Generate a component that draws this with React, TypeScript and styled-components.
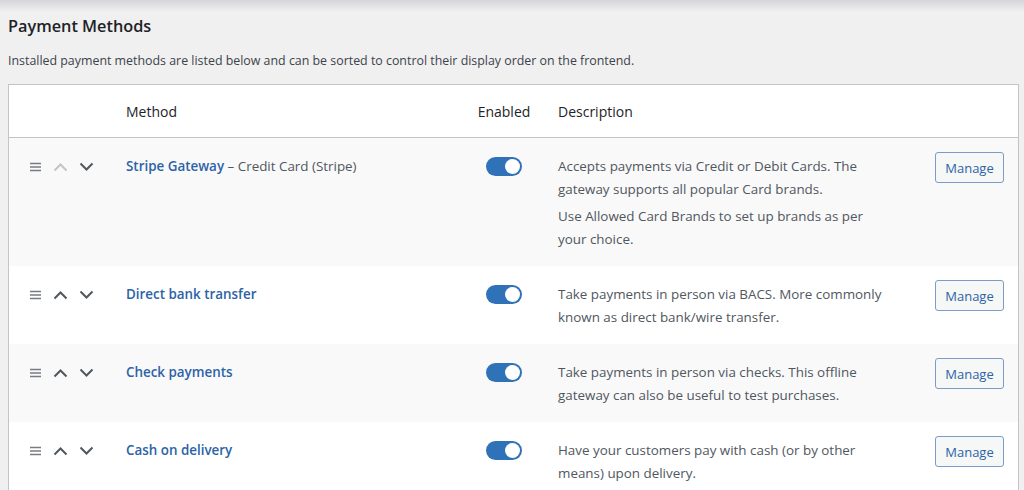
import styled, { createGlobalStyle } from "styled-components";

interface Method {
  id: string;
  title: string;
  subtitle?: string;
  paragraphs: string[][];
  first?: boolean;
}

// each paragraph is a list of lines, broken where the reference breaks them
const methods: Method[] = [
  {
    id: "stripe",
    title: "Stripe Gateway",
    subtitle: "– Credit Card (Stripe)",
    first: true,
    paragraphs: [
      ["Accepts payments via Credit or Debit Cards. The gateway supports all popular Card brands."],
      ["Use Allowed Card Brands to set up brands as per", "your choice."],
    ],
  },
  {
    id: "bacs",
    title: "Direct bank transfer",
    paragraphs: [["Take payments in person via BACS. More commonly known as direct bank/wire transfer."]],
  },
  {
    id: "cheque",
    title: "Check payments",
    paragraphs: [["Take payments in person via checks. This offline gateway can also be useful to test purchases."]],
  },
  {
    id: "cod",
    title: "Cash on delivery",
    paragraphs: [["Have your customers pay with cash (or by other means) upon delivery."]],
  },
];

const GlobalStyle = createGlobalStyle`
  html, body {
    margin: 0;
    padding: 0;
    background: #f0f0f1;
    font-family: "Open Sans", "Noto Sans", sans-serif;
    color: #3c434a;
  }
`;

function DragIcon() {
  return (
    <svg width="12" height="10" viewBox="0 0 12 10">
      <path d="M0 1.5h11M0 5h11M0 8.5h11" stroke="#787c82" strokeWidth="1.4" fill="none" />
    </svg>
  );
}

function Chevron({ up, disabled }: { up?: boolean; disabled?: boolean }) {
  return (
    <svg width="15" height="10" viewBox="0 0 15 10">
      <polyline
        points={up ? "1.5,8.5 7.5,2.5 13.5,8.5" : "1.5,1.5 7.5,7.5 13.5,1.5"}
        stroke={disabled ? "#c3c4c7" : "#50575e"}
        strokeWidth="2"
        fill="none"
      />
    </svg>
  );
}

export default function App() {
  return (
    <>
      <GlobalStyle />
      <TopShadow />
      <Page>
        <Title>Payment Methods</Title>
        <Intro>
          Installed payment methods are listed below and can be sorted to control their display order on the frontend.
        </Intro>
        <Table>
          <HeadRow>
            <span />
            <HeadCell>Method</HeadCell>
            <HeadCell $center>Enabled</HeadCell>
            <HeadCell $indent>Description</HeadCell>
            <span />
          </HeadRow>
          {methods.map((m, i) => (
            <Row key={m.id} $alt={i % 2 === 0}>
              <SortCell>
                <DragIcon />
                <Chevron up disabled={m.first} />
                <Chevron />
              </SortCell>
              <MethodCell>
                <MethodLink>{m.title}</MethodLink>
                {m.subtitle && <> {m.subtitle}</>}
              </MethodCell>
              <ToggleCell>
                <Toggle>
                  <Knob />
                </Toggle>
              </ToggleCell>
              <DescCell>
                {m.paragraphs.map((lines, pi) => (
                  <Para key={pi}>
                    {lines.map((line, li) => (
                      <span key={li}>
                        {li > 0 && <br />}
                        {line}
                      </span>
                    ))}
                  </Para>
                ))}
              </DescCell>
              <ActionCell>
                <ManageButton>Manage</ManageButton>
              </ActionCell>
            </Row>
          ))}
        </Table>
      </Page>
    </>
  );
}

const TopShadow = styled.div`
  height: 12px;
  background: linear-gradient(#d6d6d8, #f0f0f1);
`;

const Page = styled.div`
  padding: 0 5px 0 8px;
`;

const Title = styled.h1`
  margin: 2px 0 0;
  font-size: 16.3px;
  font-weight: 600;
  line-height: 24px;
  color: #1d2327;
`;

const Intro = styled.p`
  margin: 13px 0 0;
  font-size: 12.4px;
  line-height: 20px;
  color: #3c434a;
`;

const Table = styled.div`
  margin-top: 13px;
  background: #fff;
  border: 1px solid #c3c4c7;
  border-bottom: none;
`;

const columns = "117px 344px 68px 1fr 124px";

const HeadRow = styled.div`
  display: grid;
  grid-template-columns: ${columns};
  height: 52px;
  align-items: center;
  border-bottom: 1px solid #c3c4c7;
`;

const HeadCell = styled.div<{ $center?: boolean; $indent?: boolean }>`
  font-size: 14px;
  font-weight: 400;
  color: #1d2327;
  text-align: ${(p) => (p.$center ? "center" : "left")};
  padding-left: ${(p) => (p.$indent ? "20px" : "0")};
`;

const Row = styled.div<{ $alt: boolean }>`
  display: grid;
  grid-template-columns: ${columns};
  align-items: start;
  padding: 17px 0 15px;
  background: ${(p) => (p.$alt ? "#f9f9f9" : "#fff")};
`;

const SortCell = styled.div`
  display: flex;
  align-items: center;
  gap: 11px;
  padding-left: 21px;
  height: 23px;
`;

const MethodCell = styled.div`
  font-size: 13.4px;
  line-height: 23px;
  color: #50575e;
`;

const MethodLink = styled.a`
  font-weight: 600;
  color: #2c63a6;
  text-decoration: none;
`;

const ToggleCell = styled.div`
  display: flex;
  justify-content: center;
  height: 23px;
  align-items: center;
`;

const Toggle = styled.span`
  display: flex;
  align-items: center;
  justify-content: flex-end;
  box-sizing: border-box;
  width: 36px;
  height: 19px;
  padding: 0 2px;
  border-radius: 10px;
  background: #3072b8;
`;

const Knob = styled.span`
  width: 15px;
  height: 15px;
  border-radius: 50%;
  background: #fff;
`;

const DescCell = styled.div`
  padding-left: 20px;
  max-width: 330px;
  font-size: 13.4px;
  line-height: 23px;
  color: #50575e;
`;

const Para = styled.p`
  margin: 0;
  & + & {
    margin-top: 4px;
  }
`;

const ActionCell = styled.div`
  display: flex;
  justify-content: flex-end;
  padding-right: 14px;
`;

const ManageButton = styled.button`
  box-sizing: border-box;
  width: 69px;
  height: 31px;
  margin-top: -3px;
  border: 1px solid #7c9cc6;
  border-radius: 3px;
  background: #f6f7f7;
  color: #2c63a6;
  font-family: inherit;
  font-size: 13px;
  padding: 0;
`;
